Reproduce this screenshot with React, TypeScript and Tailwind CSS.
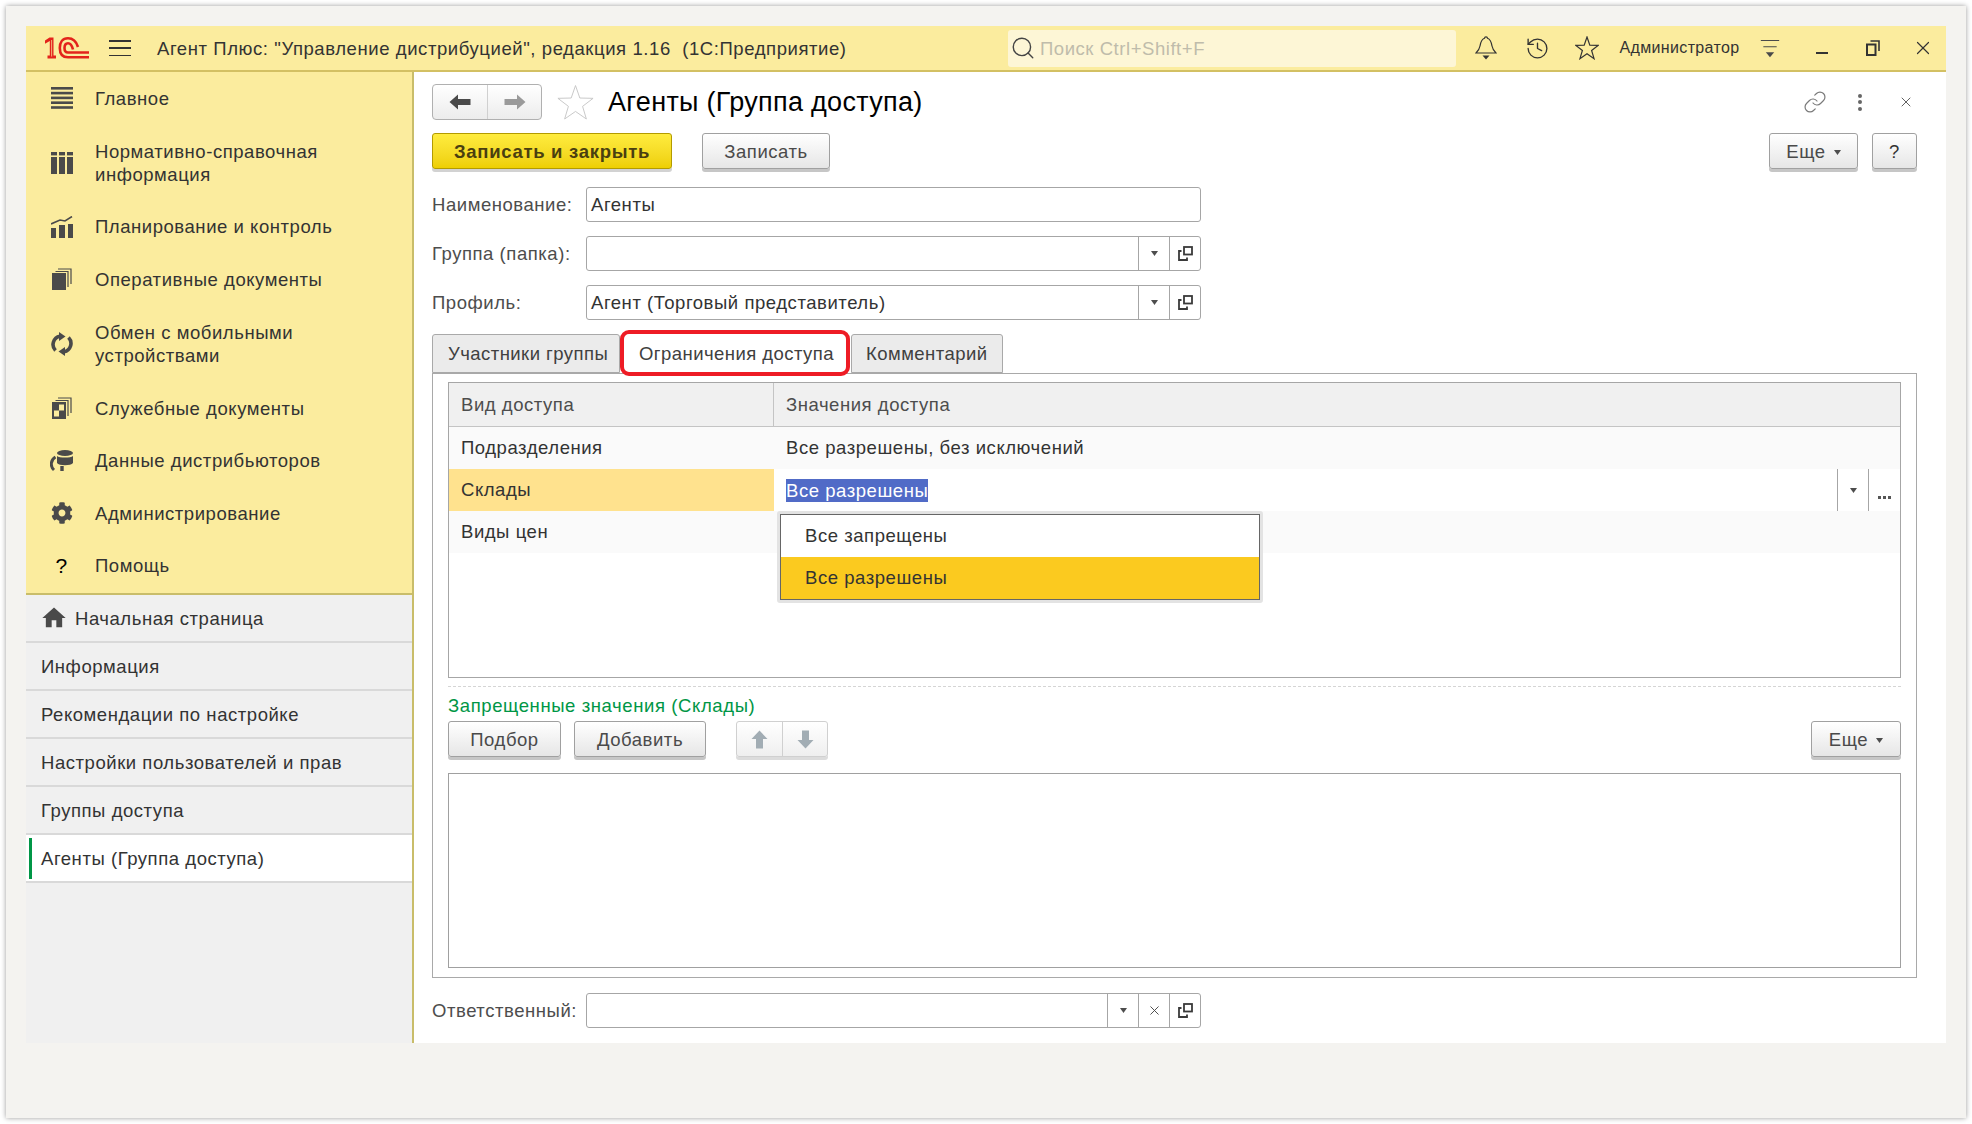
import { History, Link, X, Search } from "lucide-react";
import { MdHome } from "react-icons/md";
import { FaCog } from "react-icons/fa";
import type { ReactNode } from "react";

function Logo() {
    return (
        <svg width="44" height="22" viewBox="0 0 44 22" fill="none" className="ml-[19px]">
            <path d="M0 3.5L4.5 0.5H8.5V18.5H11V21.5H2.5V18.5H4.8V4L0 6.8Z" fill="#e3231b" />
            <path d="M6.6 3V19.5" stroke="#fbec9e" strokeWidth="0.7" />
            <path d="M33 10C31 3.5 27 1.3 23 1.3C17.5 1.3 14.8 5.5 14.8 11C14.8 16.5 17.5 20.3 23 20.3H44" stroke="#e3231b" strokeWidth="2.6" />
            <path d="M28 12.5C27 8.5 25.5 6.2 23 6.2C20.5 6.2 19.5 8.5 19.5 11C19.5 13.5 20.5 15.5 23 15.5H44" stroke="#e3231b" strokeWidth="2.6" />
        </svg>
    );
}

function MainIcon() {
    return (
        <svg width="22" height="22" viewBox="0 0 22 22" fill="#4a4a4a">
            <rect y="0" width="22" height="2.6" />
            <rect y="4.8" width="22" height="2.6" />
            <rect y="9.6" width="22" height="2.6" />
            <rect y="14.4" width="22" height="2.6" />
            <rect y="19.2" width="22" height="2.6" />
        </svg>
    );
}

function BooksIcon() {
    return (
        <svg width="22" height="22" viewBox="0 0 22 22" fill="#4a4a4a">
            <rect x="0" y="0" width="6" height="3.4" />
            <rect x="8" y="0" width="6" height="3.4" />
            <rect x="16" y="0" width="6" height="3.4" />
            <rect x="0" y="5" width="6" height="17" />
            <rect x="8" y="5" width="6" height="17" />
            <rect x="16" y="5" width="6" height="17" />
        </svg>
    );
}

function ChartIcon() {
    return (
        <svg width="22" height="22" viewBox="0 0 22 22" fill="#4a4a4a">
            <rect x="0" y="12" width="5" height="10" />
            <rect x="8" y="9" width="6" height="13" />
            <rect x="17" y="8" width="5" height="14" />
            <path d="M0 8L9 4L14 5L21 0.5" stroke="#4a4a4a" strokeWidth="1.6" fill="none" />
        </svg>
    );
}

function DocsIcon() {
    return (
        <svg width="20" height="22" viewBox="0 0 20 22" fill="none">
            <rect x="0" y="5" width="14" height="17" fill="#4a4a4a" />
            <path d="M3.5 3.5H16V19" stroke="#4a4a4a" strokeWidth="1.2" />
            <path d="M6 1H19V16" stroke="#4a4a4a" strokeWidth="1.2" />
        </svg>
    );
}

function ServiceDocsIcon() {
    return (
        <svg width="20" height="22" viewBox="0 0 20 22" fill="none">
            <rect x="0" y="5" width="14" height="17" fill="#4a4a4a" />
            <rect x="7" y="7.5" width="5" height="6" fill="#fbec9e" />
            <rect x="2" y="13.5" width="5" height="6" fill="#fbec9e" />
            <path d="M3.5 3.5H16V19" stroke="#4a4a4a" strokeWidth="1.2" />
            <path d="M6 1H19V16" stroke="#4a4a4a" strokeWidth="1.2" />
        </svg>
    );
}

function SyncIcon() {
    return (
        <svg width="22" height="24" viewBox="0 0 22 24" fill="none">
            <path d="M9 4.2A8.5 8.5 0 0 0 4.5 18.5" stroke="#4a4a4a" strokeWidth="3.6" />
            <path d="M13 19.8A8.5 8.5 0 0 0 17.5 5.5" stroke="#4a4a4a" strokeWidth="3.6" />
            <path d="M8 0V9L14.5 4.5Z" fill="#4a4a4a" />
            <path d="M14 15V24L7.5 19.5Z" fill="#4a4a4a" />
        </svg>
    );
}

function DataIcon() {
    return (
        <svg width="24" height="22" viewBox="0 0 24 22" fill="none">
            <ellipse cx="15" cy="3" rx="8" ry="3" fill="#4a4a4a" />
            <path d="M7 6C9 8 21 8 23 6V13C21 16 9 16 7 13Z" fill="#4a4a4a" />
            <path d="M5.5 7A8 8 0 0 0 4 20" stroke="#4a4a4a" strokeWidth="3" />
            <path d="M12 16V21" stroke="#4a4a4a" strokeWidth="3.4" />
        </svg>
    );
}

function BellIcon() {
    return (
        <svg width="22" height="24" viewBox="0 0 22 24" fill="none">
            <path d="M11 0.8A1.5 1.5 0 0 1 12.5 2.2C16 3.5 16.5 7 17 10C17.5 13 19 15 21 17H1C3 15 4.5 13 5 10C5.5 7 6 3.5 9.5 2.2A1.5 1.5 0 0 1 11 0.8Z" stroke="#333" strokeWidth="1.2" />
            <path d="M7.5 19.5H14.5L11 23.5Z" fill="#333" />
        </svg>
    );
}

function StarIcon({ size, color, stroke }: { size: number; color: string; stroke: number }) {
    return (
        <svg width={size} height={size} viewBox="0 0 24 24" fill="none" stroke={color} strokeWidth={stroke}>
            <polygon points="12,1 14.8,9.1 23.4,9.3 16.6,14.5 19.05,22.7 12,17.8 4.95,22.7 7.4,14.5 0.6,9.3 9.2,9.1" />
        </svg>
    );
}

function MinusRows() {
    return (
        <svg width="20" height="24" viewBox="0 0 24 24" fill="none">
            <path d="M1 3H23M4 10.5H20" stroke="#4a4a4a" strokeWidth="1.4" />
            <path d="M7 17H17L12 23Z" fill="#4a4a4a" />
        </svg>
    );
}

function RestoreIcon() {
    return (
        <svg width="14" height="16" viewBox="0 0 14 16" fill="none" stroke="#333">
            <rect x="1" y="4.5" width="8.5" height="10.5" strokeWidth="2" />
            <path d="M4.5 1H13V11" strokeWidth="1.6" />
        </svg>
    );
}

function OpenIcon() {
    return (
        <svg width="15" height="15" viewBox="0 0 15 15" fill="none" stroke="#3a3a3a" strokeWidth="1.8">
            <rect x="6" y="1" width="8" height="7.5" />
            <path d="M3.5 5H1V14H9V11.5" />
        </svg>
    );
}

function Caret() {
    return (
        <svg width="7" height="5" viewBox="0 0 7 5">
            <path d="M0 0H7L3.5 5Z" fill="#4d4d4d" />
        </svg>
    );
}

function ArrowH({ dir, color }: { dir: "left" | "right"; color: string }) {
    return (
        <svg width="22" height="16" viewBox="0 0 22 16" className={dir === "right" ? "rotate-180" : ""}>
            <path d="M0.5 8L9 0.5V5H21.5V11H9V15.5Z" fill={color} />
        </svg>
    );
}

function ArrowV({ dir }: { dir: "up" | "down" }) {
    return (
        <svg width="17" height="19" viewBox="0 0 17 19" className={dir === "down" ? "rotate-180" : ""}>
            <path d="M8.5 0.5L16.5 9H12V18.5H5V9H0.5Z" fill="#a2adb4" />
        </svg>
    );
}

function Button({ children, className = "" }: { children: ReactNode; className?: string }) {
    return (
        <div className={`flex h-[36px] items-center justify-center rounded-[3px] border border-[#a0a0a0] bg-linear-to-b from-white to-[#e6e6e6] pt-[2px] text-[#4a4a4a] shadow-[0_3px_0_#c6c6c6] ${className}`}>
            {children}
        </div>
    );
}

function Field({ label, value, buttons = [] }: { label: string; value?: string; buttons?: ReactNode[] }) {
    return (
        <div className="flex items-center">
            <div className="w-[154px] text-[#4d4d4d]">{label}</div>
            <div className="flex h-[35px] w-[615px] overflow-hidden rounded-[3px] border border-[#a6a6a6] bg-white">
                <div className="flex-1 pl-[4px] leading-[33px] text-[#333]">{value}</div>
                {buttons.map((b, i) => (
                    <div key={i} className="flex w-[31px] items-center justify-center border-l border-[#a6a6a6]">{b}</div>
                ))}
            </div>
        </div>
    );
}

const topMenu = [
    { icon: <MainIcon />, lines: ["Главное"] },
    { icon: <BooksIcon />, lines: ["Нормативно-справочная", "информация"] },
    { icon: <ChartIcon />, lines: ["Планирование и контроль"] },
    { icon: <DocsIcon />, lines: ["Оперативные документы"] },
    { icon: <SyncIcon />, lines: ["Обмен с мобильными", "устройствами"] },
    { icon: <ServiceDocsIcon />, lines: ["Служебные документы"] },
    { icon: <DataIcon />, lines: ["Данные дистрибьюторов"] },
    { icon: <FaCog size={22} color="#4a4a4a" />, lines: ["Администрирование"] },
    { icon: <span className="text-[21px] text-black">?</span>, lines: ["Помощь"] },
];

const openTabs = ["Информация", "Рекомендации по настройке", "Настройки пользователей и прав", "Группы доступа"];

const rows = [
    { name: "Подразделения", value: "Все разрешены, без исключений", bg: "bg-[#fafafa]" },
    { name: "Склады", value: "", bg: "bg-white" },
    { name: "Виды цен", value: "", bg: "bg-[#fafafa]" },
];

export default function App() {
    return (
        <div className="h-[1124px] w-[1972px] overflow-hidden bg-white p-[6px] font-['Liberation_Sans',Arial,sans-serif] text-[18.5px] tracking-[0.55px]">
            <div className="h-full w-full bg-[#f4f3f0] p-[20px] shadow-[0_0_5px_rgba(0,0,0,0.4)]">
                <div className="flex h-[1017px] w-[1920px] flex-col overflow-hidden bg-white">

                    {/* Top bar */}
                    <div className="flex h-[46px] shrink-0 items-center border-b-2 border-[#d3c063] bg-[#fbec9e]">
                        <Logo />
                        <div className="ml-[20px] flex h-[16px] w-[22px] flex-col justify-between">
                            <div className="h-[1.5px] bg-[#333]" />
                            <div className="h-[1.5px] bg-[#333]" />
                            <div className="h-[1.5px] bg-[#333]" />
                        </div>
                        <div className="ml-[26px] w-[851px] pt-[2px] tracking-[0.58px] text-[#333]">Агент Плюс: "Управление дистрибуцией", редакция 1.16&nbsp;&nbsp;(1С:Предприятие)</div>
                        <div className="flex h-[37px] w-[448px] items-center rounded-[3px] bg-[#fdf6d6] pl-[2px]">
                            <Search size={26} strokeWidth={1.3} color="#444" />
                            <span className="ml-[4px] pt-[2px] text-[#bfbcab]">Поиск Ctrl+Shift+F</span>
                        </div>
                        <div className="ml-[19px]"><BellIcon /></div>
                        <History size={25} strokeWidth={1.3} color="#333" className="ml-[27.5px]" />
                        <div className="ml-[25.5px]"><StarIcon size={24} color="#333" stroke={1.2} /></div>
                        <div className="ml-[20.5px] w-[121px] text-[16px] tracking-[0.35px] text-[#333]">Администратор</div>
                        <div className="ml-[19.5px] w-[20px]"><MinusRows /></div>
                        <div className="ml-[36px] mt-[10px] h-[2px] w-[12px] bg-[#333]" />
                        <div className="ml-[38px]"><RestoreIcon /></div>
                        <X size={22} strokeWidth={1.3} color="#333" className="ml-[32px]" />
                    </div>

                    <div className="flex min-h-0 flex-1">

                        {/* Sidebar */}
                        <div className="flex w-[388px] shrink-0 flex-col border-r-2 border-[#c9bd6a] bg-[#f0f0f0]">
                            <div className="h-[523px] border-b-2 border-[#c9bd6a] bg-[#fbec9e]">
                                {topMenu.map((item) => (
                                    <div key={item.lines[0]} className={`flex items-center ${item.lines.length > 1 ? "h-[76px]" : "h-[52.6px]"}`}>
                                        <div className="flex w-[69px] justify-center pl-[2px]">{item.icon}</div>
                                        <div className="leading-[23px] text-[#333]">
                                            {item.lines.map((l) => <div key={l}>{l}</div>)}
                                        </div>
                                    </div>
                                ))}
                            </div>
                            <div className="flex h-[48px] items-center border-b-2 border-[#d9d9d9] pl-[14px] text-[#333]">
                                <MdHome size={28} color="#4a4a4a" />
                                <span className="ml-[7px] pt-[2px]">Начальная страница</span>
                            </div>
                            {openTabs.map((t) => (
                                <div key={t} className="flex h-[48px] items-center border-b-2 border-[#d9d9d9] pl-[15px] pt-[2px] text-[#333]">{t}</div>
                            ))}
                            <div className="flex h-[48px] items-center border-b-2 border-[#d9d9d9] bg-white pl-[3px] text-[#333]">
                                <div className="h-[41px] w-[3px] bg-[#009646]" />
                                <span className="ml-[9px] pt-[2px]">Агенты (Группа доступа)</span>
                            </div>
                        </div>

                        {/* Form */}
                        <div className="min-w-0 flex-1 pl-[18px]">
                            <div className="mt-[12px] flex h-[36px] items-center">
                                <div className="flex h-[36px] w-[110px] rounded-[4px] border border-[#b0b0b0] bg-linear-to-b from-white to-[#ececec]">
                                    <div className="flex w-[55px] items-center justify-center border-r border-[#d0d0d0]"><ArrowH dir="left" color="#4a4a4a" /></div>
                                    <div className="flex flex-1 items-center justify-center"><ArrowH dir="right" color="#9a9a9a" /></div>
                                </div>
                                <div className="ml-[15px]"><StarIcon size={37} color="#c4c4c4" stroke={0.6} /></div>
                                <div className="ml-[14px] w-[1195px] text-[27px] tracking-[0.3px] text-black">Агенты (Группа доступа)</div>
                                <Link size={24} strokeWidth={1.2} color="#7a7a7a" />
                                <div className="ml-[31px] flex h-[17px] flex-col justify-between">
                                    <div className="size-[4px] rounded-full bg-[#666]" />
                                    <div className="size-[4px] rounded-full bg-[#666]" />
                                    <div className="size-[4px] rounded-full bg-[#666]" />
                                </div>
                                <X size={16} strokeWidth={1.4} color="#555" className="ml-[36px]" />
                            </div>

                            <div className="mt-[13px] flex items-center">
                                <div className="flex h-[36px] w-[240px] items-center justify-center rounded-[3px] border border-[#b39b00] bg-linear-to-b from-[#ffec3d] to-[#eecf00] pt-[2px] font-bold tracking-[0.7px] text-[#4a3f10] shadow-[0_3px_0_#d2d2d2]">Записать и закрыть</div>
                                <Button className="ml-[30px] w-[128px]">Записать</Button>
                                <Button className="ml-[939px] w-[89px] gap-[8px]">Еще <Caret /></Button>
                                <Button className="ml-[14px] w-[45px] text-[#333]">?</Button>
                            </div>

                            <div className="mt-[18px] flex flex-col gap-[14px]">
                                <Field label="Наименование:" value="Агенты" />
                                <Field label="Группа (папка):" buttons={[<Caret />, <OpenIcon />]} />
                                <Field label="Профиль:" value="Агент (Торговый представитель)" buttons={[<Caret />, <OpenIcon />]} />
                            </div>

                            {/* Tabs */}
                            <div className="relative mt-[14px] flex h-[39px] w-[571px] tracking-[0.45px] text-[#404040]">
                                <div className="flex w-[188px] items-center rounded-t-[3px] border border-[#a9a9a9] bg-[#ebebeb] pl-[15px]">Участники группы</div>
                                <div className="flex w-[231px] items-center pl-[19px]">Ограничения доступа</div>
                                <div className="flex w-[152px] items-center rounded-t-[3px] border border-[#a9a9a9] bg-[#ebebeb] pl-[14px]">Комментарий</div>
                                <div className="absolute left-[188px] top-[-4px] z-10 h-[46px] w-[230px] rounded-[9px] border-4 border-[#ee1c25]" />
                            </div>

                            <div className="h-[605px] w-[1485px] border border-[#a9a9a9] px-[15px] pt-[8px]">
                                <div className="relative h-[296px] w-[1453px] border border-[#a6a6a6]">
                                    <div className="flex h-[44px] border-b border-[#c4c4c4] bg-[#f0f0f0] text-[#4d4d4d]">
                                        <div className="flex w-[325px] items-center border-r border-[#c4c4c4] pl-[12px]">Вид доступа</div>
                                        <div className="flex flex-1 items-center pl-[12px]">Значения доступа</div>
                                    </div>
                                    {rows.map((r) => (
                                        <div key={r.name} className={`flex h-[42px] text-[#333] ${r.bg}`}>
                                            <div className={`flex w-[325px] items-center pl-[12px] ${r.name === "Склады" ? "bg-[#ffe28e]" : ""}`}>{r.name}</div>
                                            <div className="flex flex-1 items-center pl-[12px]">
                                                {r.name === "Склады" ? (
                                                    <>
                                                        <span className="bg-[#516bc7] leading-[23px] text-white">Все разрешены</span>
                                                        <div className="ml-auto flex h-full">
                                                            <div className="flex w-[31px] items-center justify-center border-l border-[#a6a6a6]"><Caret /></div>
                                                            <div className="flex w-[32px] items-end justify-center border-l border-[#a6a6a6] pb-[12px]">
                                                                <div className="flex gap-[2px]">
                                                                    <div className="size-[3px] bg-[#555]" />
                                                                    <div className="size-[3px] bg-[#555]" />
                                                                    <div className="size-[3px] bg-[#555]" />
                                                                </div>
                                                            </div>
                                                        </div>
                                                    </>
                                                ) : r.value}
                                            </div>
                                        </div>
                                    ))}
                                    {/* Dropdown */}
                                    <div className="absolute left-[328px] top-[128px] z-10 h-[92px] w-[486px] rounded-[3px] border-[3px] border-[#e3e3e3]">
                                        <div className="h-full border border-[#666] bg-white text-[#333]">
                                            <div className="flex h-[42px] items-center pl-[24px]">Все запрещены</div>
                                            <div className="flex h-[42px] items-center bg-[#fbca1f] pl-[24px]">Все разрешены</div>
                                        </div>
                                    </div>
                                </div>

                                <div className="mt-[8px] border-t border-dashed border-[#d5d5d5]" />
                                <div className="mt-[8px] h-[22px] leading-[22px] tracking-[0.6px] text-[#009646]">Запрещенные значения (Склады)</div>

                                <div className="mt-[4px] flex items-center">
                                    <Button className="w-[113px]">Подбор</Button>
                                    <Button className="ml-[13px] w-[132px]">Добавить</Button>
                                    <div className="ml-[30px] flex h-[36px] w-[92px] rounded-[3px] border border-[#d0d0d0] bg-linear-to-b from-white to-[#efefef] shadow-[0_3px_0_#dcdcdc]">
                                        <div className="flex w-[46px] items-center justify-center border-r border-[#d0d0d0]"><ArrowV dir="up" /></div>
                                        <div className="flex flex-1 items-center justify-center"><ArrowV dir="down" /></div>
                                    </div>
                                    <Button className="ml-auto w-[90px] gap-[8px]">Еще <Caret /></Button>
                                </div>

                                <div className="mt-[16px] h-[195px] w-[1453px] border border-[#a0a0a0]" />
                            </div>

                            <div className="mt-[15px]">
                                <Field label="Ответственный:" buttons={[<Caret />, <X size={15} strokeWidth={1.5} color="#444" />, <OpenIcon />]} />
                            </div>
                        </div>
                    </div>
                </div>
            </div>
        </div>
    );
}
